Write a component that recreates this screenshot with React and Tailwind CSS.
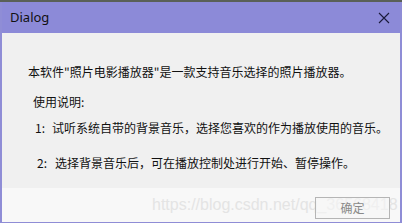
import React from "react";

const font = { fontFamily: '"Noto Sans CJK SC", "Liberation Sans", sans-serif' };

export default function App() {
  return (
    <div className="w-[402px] h-[223px] bg-[#5a6058] pt-[2px] overflow-hidden" style={font}>
      <div className="h-[221px] border-x-[2px] border-b border-[#8f8dd6] bg-[#f0f0f0] flex flex-col">
        <div className="h-[31px] bg-[#8c8ad8] flex items-center justify-between pl-[8px] pr-[8px] shrink-0">
          <span className="text-[13px] text-[#111] leading-none" style={{ fontFamily: '"Noto Sans", sans-serif' }}>Dialog</span>
          <svg width="14" height="14" viewBox="0 0 14 14" className="mr-[1px]">
            <path d="M2 2 L12 12 M12 2 L2 12" stroke="#1a1a3a" strokeWidth="1.1" fill="none" />
          </svg>
        </div>
        <div className="flex-1 text-[12px] text-[#111] leading-none pl-[26px]">
          <div className="mt-[33px]">本软件"照片电影播放器"是一款支持音乐选择的照片播放器。</div>
          <div className="mt-[18px] pl-[5px]">使用说明:</div>
          <div className="mt-[14px] pl-[7px] flex">
            <span className="w-[17px]">1:</span>
            <span>试听系统自带的背景音乐，选择您喜欢的作为播放使用的音乐。</span>
          </div>
          <div className="mt-[23px] pl-[9px] flex">
            <span className="w-[18px]">2:</span>
            <span>选择背景音乐后，可在播放控制处进行开始、暂停操作。</span>
          </div>
        </div>
        <div className="h-[34px] bg-[#f8f8f8] relative flex items-start justify-end pr-[10px] pt-[9px] shrink-0">
          <span className="absolute left-[150px] top-[9px] text-[16px] text-[#e4e4e4] leading-none whitespace-nowrap" style={{ fontFamily: '"Liberation Sans", sans-serif' }}>https://blog.csdn.net/qq_36568418</span>
          <div className="relative w-[75px] h-[22px] border border-[#b5b5b5] bg-[#f6f6f6]/60 flex items-center justify-center text-[12px] text-[#8a8a8a]">
            确定
          </div>
        </div>
      </div>
    </div>
  );
}
